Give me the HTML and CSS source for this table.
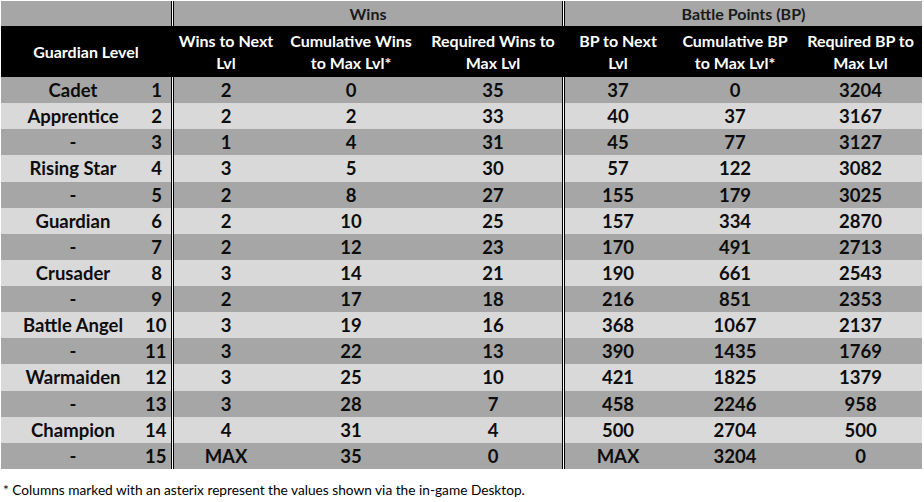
FILE: index.html
```html
<!DOCTYPE html>
<html>
<head>
<meta charset="utf-8">
<link rel="stylesheet" href="styles.css">
</head>
<body>
<table class="lvl-table">
  <colgroup>
    <col class="c-name"><col class="c-num"><col class="c-sep">
    <col class="c-w1"><col class="c-w2"><col class="c-w3"><col class="c-sep">
    <col class="c-b1"><col class="c-b2"><col class="c-b3">
  </colgroup>
  <thead>
    <tr class="group-row">
      <th colspan="2"></th><th class="sep"></th>
      <th colspan="3">Wins</th><th class="sep"></th>
      <th colspan="3">Battle Points (BP)</th>
    </tr>
    <tr class="head-row">
      <th colspan="2">Guardian Level</th><th class="sep"></th>
      <th>Wins to Next<br>Lvl</th>
      <th>Cumulative Wins<br>to Max Lvl*</th>
      <th>Required Wins to<br>Max Lvl</th><th class="sep"></th>
      <th>BP to Next<br>Lvl</th>
      <th>Cumulative BP<br>to Max Lvl*</th>
      <th>Required BP to<br>Max Lvl</th>
    </tr>
  </thead>
  <tbody>
    <tr><td class="name">Cadet</td><td class="num">1</td><td class="sep"></td><td>2</td><td>0</td><td>35</td><td class="sep"></td><td>37</td><td>0</td><td>3204</td></tr>
    <tr><td class="name">Apprentice</td><td class="num">2</td><td class="sep"></td><td>2</td><td>2</td><td>33</td><td class="sep"></td><td>40</td><td>37</td><td>3167</td></tr>
    <tr><td class="name">-</td><td class="num">3</td><td class="sep"></td><td>1</td><td>4</td><td>31</td><td class="sep"></td><td>45</td><td>77</td><td>3127</td></tr>
    <tr><td class="name">Rising Star</td><td class="num">4</td><td class="sep"></td><td>3</td><td>5</td><td>30</td><td class="sep"></td><td>57</td><td>122</td><td>3082</td></tr>
    <tr><td class="name">-</td><td class="num">5</td><td class="sep"></td><td>2</td><td>8</td><td>27</td><td class="sep"></td><td>155</td><td>179</td><td>3025</td></tr>
    <tr><td class="name">Guardian</td><td class="num">6</td><td class="sep"></td><td>2</td><td>10</td><td>25</td><td class="sep"></td><td>157</td><td>334</td><td>2870</td></tr>
    <tr><td class="name">-</td><td class="num">7</td><td class="sep"></td><td>2</td><td>12</td><td>23</td><td class="sep"></td><td>170</td><td>491</td><td>2713</td></tr>
    <tr><td class="name">Crusader</td><td class="num">8</td><td class="sep"></td><td>3</td><td>14</td><td>21</td><td class="sep"></td><td>190</td><td>661</td><td>2543</td></tr>
    <tr><td class="name">-</td><td class="num">9</td><td class="sep"></td><td>2</td><td>17</td><td>18</td><td class="sep"></td><td>216</td><td>851</td><td>2353</td></tr>
    <tr><td class="name">Battle Angel</td><td class="num">10</td><td class="sep"></td><td>3</td><td>19</td><td>16</td><td class="sep"></td><td>368</td><td>1067</td><td>2137</td></tr>
    <tr><td class="name">-</td><td class="num">11</td><td class="sep"></td><td>3</td><td>22</td><td>13</td><td class="sep"></td><td>390</td><td>1435</td><td>1769</td></tr>
    <tr><td class="name">Warmaiden</td><td class="num">12</td><td class="sep"></td><td>3</td><td>25</td><td>10</td><td class="sep"></td><td>421</td><td>1825</td><td>1379</td></tr>
    <tr><td class="name">-</td><td class="num">13</td><td class="sep"></td><td>3</td><td>28</td><td>7</td><td class="sep"></td><td>458</td><td>2246</td><td>958</td></tr>
    <tr><td class="name">Champion</td><td class="num">14</td><td class="sep"></td><td>4</td><td>31</td><td>4</td><td class="sep"></td><td>500</td><td>2704</td><td>500</td></tr>
    <tr><td class="name">-</td><td class="num">15</td><td class="sep"></td><td>MAX</td><td>35</td><td>0</td><td class="sep"></td><td>MAX</td><td>3204</td><td>0</td></tr>
  </tbody>
</table>
<p class="footnote">* Columns marked with an asterix represent the values shown via the in-game Desktop.</p>
</body>
</html>
```
FILE: styles.css
```css
html, body {
  margin: 0;
  padding: 0;
  background: #ffffff;
}
body {
  padding: 1px 0 0 1px;
  font-family: "Lato", "Open Sans", sans-serif;
  color: #000;
}
.lvl-table {
  border-collapse: collapse;
  border-spacing: 0;
  table-layout: fixed;
  width: 921px;
}
.c-name { width: 144px; }
.c-num { width: 26px; }
.c-sep { width: 3px; }
.c-w1 { width: 104px; }
.c-w2 { width: 146px; }
.c-w3 { width: 138px; }
.c-b1 { width: 106px; }
.c-b2 { width: 128px; }
.c-b3 { width: 123px; }

.lvl-table th,
.lvl-table td {
  padding: 0;
  text-align: center;
  vertical-align: middle;
  white-space: nowrap;
}
.lvl-table .sep {
  background: linear-gradient(to right, #000 0 1px, #fff 1px 2px, #000 2px 3px);
}
.group-row th {
  height: 25px;
  background: #a6a6a6;
  font-size: 16px;
  font-weight: 700;
  color: #1a1a1a;
}
.head-row th {
  height: 51px;
  background: #000;
  color: #fff;
  font-size: 16px;
  font-weight: 700;
  line-height: 22px;
}
.head-row th.sep {
  background: #000;
}
.lvl-table tbody td {
  height: 26.13px;
  font-size: 18.5px;
  font-weight: 700;
  line-height: 20px;
  color: #0d0d0d;
}
.lvl-table tbody tr:nth-child(odd) td { background-color: #a6a6a6; }
.lvl-table tbody tr:nth-child(even) td { background-color: #d9d9d9; }
.lvl-table tbody tr td.sep { background-color: transparent; }
.lvl-table tbody td.num {
  text-align: right;
  padding-right: 9px;
}
.footnote {
  margin: 11px 0 0 2px;
  font-size: 13.7px;
  line-height: 20px;
  color: #000;
}
```
